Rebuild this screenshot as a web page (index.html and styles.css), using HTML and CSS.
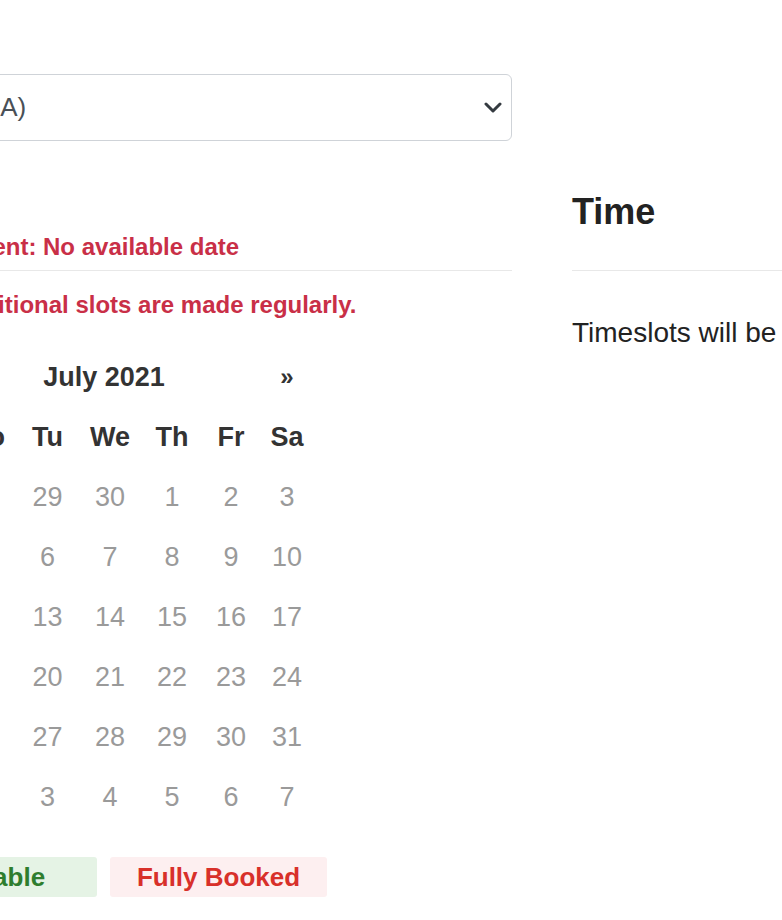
FILE: index.html
```html
<!DOCTYPE html>
<html lang="en">
<head>
<meta charset="utf-8">
<title>Booking</title>
<link rel="stylesheet" href="styles.css">
</head>
<body>
<div class="page">
  <div class="col-left">
    <div class="select">
      <span class="select-text">Main Clinic (USA)</span>
      <svg class="chev" width="18" height="11" viewBox="0 0 18 11" aria-hidden="true"><polyline points="2,2 9,9 16,2" fill="none" stroke="#343a40" stroke-width="3" stroke-linecap="round" stroke-linejoin="round"/></svg>
    </div>
    <p class="notice notice-first">Earliest appointment: No available date</p>
    <div class="divider divider-left"></div>
    <p class="notice notice-second">Fully booked. Additional slots are made regularly.</p>
    <div class="calendar">
      <table class="cal-table">
        <colgroup>
          <col class="c-su"><col class="c-mo"><col class="c-tu"><col class="c-we"><col class="c-th"><col class="c-fr"><col class="c-sa">
        </colgroup>
        <thead>
          <tr class="cal-head">
            <th class="nav">&laquo;</th>
            <th class="month" colspan="5">July 2021</th>
            <th class="nav">&raquo;</th>
          </tr>
          <tr class="cal-dow">
            <th>Su</th><th>Mo</th><th>Tu</th><th>We</th><th>Th</th><th>Fr</th><th>Sa</th>
          </tr>
        </thead>
        <tbody>
          <tr><td>27</td><td>28</td><td>29</td><td>30</td><td>1</td><td>2</td><td>3</td></tr>
          <tr><td>4</td><td>5</td><td>6</td><td>7</td><td>8</td><td>9</td><td>10</td></tr>
          <tr><td>11</td><td>12</td><td>13</td><td>14</td><td>15</td><td>16</td><td>17</td></tr>
          <tr><td>18</td><td>19</td><td>20</td><td>21</td><td>22</td><td>23</td><td>24</td></tr>
          <tr><td>25</td><td>26</td><td>27</td><td>28</td><td>29</td><td>30</td><td>31</td></tr>
          <tr><td>1</td><td>2</td><td>3</td><td>4</td><td>5</td><td>6</td><td>7</td></tr>
        </tbody>
      </table>
    </div>
    <div class="legend">
      <span class="legend-item legend-available">Available</span>
      <span class="legend-item legend-booked">Fully Booked</span>
    </div>
  </div>
  <div class="col-right">
    <h5 class="time-title">Time</h5>
    <div class="divider divider-right"></div>
    <p class="timeslots">Timeslots will be shown once you select a date.</p>
  </div>
</div>
</body>
</html>
```

FILE: styles.css
```css
html, body {
  margin: 0;
  padding: 0;
  background: #ffffff;
  overflow: hidden;
}

body {
  font-family: "Liberation Sans", Arial, sans-serif;
  color: #212529;
}

.page {
  display: flex;
  align-items: flex-start;
  gap: 60px;
  margin-left: -209px;
  width: 1400px;
}

.col-left {
  flex: 0 0 721px;
}

.col-right {
  flex: 0 0 600px;
}

/* select */
.select {
  box-sizing: border-box;
  height: 67px;
  margin-top: 74px;
  border: 1px solid #cfd3d8;
  border-radius: 6px;
  display: flex;
  align-items: center;
  justify-content: space-between;
  padding: 0 9px 0 29px;
  font-size: 26px;
  color: #495057;
  background: #fff;
}

.chev {
  display: block;
}

/* notices */
.notice {
  margin: 0;
  font-size: 24px;
  line-height: 36px;
  font-weight: bold;
  color: #c92f47;
  white-space: nowrap;
}

.notice-first {
  margin-top: 88px;
}

.notice-second {
  margin-top: 16px;
}

.divider {
  height: 0;
  border-top: 1px solid #e8e8e8;
}

.divider-left {
  margin-top: 5px;
}

/* calendar */
.calendar {
  margin: 24px 0 0 106px;
  width: 418px;
}

.cal-table {
  width: 418px;
  table-layout: fixed;
  border-collapse: collapse;
  border-spacing: 0;
}

.c-su { width: 58px; }
.c-mo { width: 61px; }
.c-tu { width: 63px; }
.c-we { width: 62px; }
.c-th { width: 62px; }
.c-fr { width: 56px; }
.c-sa { width: 56px; }

.cal-table th,
.cal-table td {
  height: 60px;
  padding: 0;
  text-align: center;
  vertical-align: middle;
  font-size: 27px;
  white-space: nowrap;
}

.cal-table th {
  font-weight: bold;
  color: #333333;
}

.cal-table th.month {
  padding-right: 6px;
}

.cal-table th.nav {
  font-size: 24px;
}

.cal-table td {
  color: #9a9a9a;
}

/* legend */
.legend {
  display: flex;
  gap: 13px;
  margin: 30px 0 0 89px;
}

.legend-item {
  display: block;
  width: 217px;
  height: 40px;
  line-height: 40px;
  text-align: center;
  font-size: 26px;
  font-weight: bold;
  border-radius: 3px;
}

.legend-available {
  background: #e5f3e5;
  color: #2e7d2e;
}

.legend-booked {
  background: #fdeff0;
  color: #d8302a;
}

/* right column */
.time-title {
  margin: 190px 0 0;
  font-size: 36px;
  line-height: 44px;
  font-weight: bold;
  color: #222222;
}

.divider-right {
  margin-top: 36px;
}

.timeslots {
  margin: 41px 0 0;
  font-size: 28px;
  line-height: 42px;
  white-space: nowrap;
  color: #222222;
}
```
